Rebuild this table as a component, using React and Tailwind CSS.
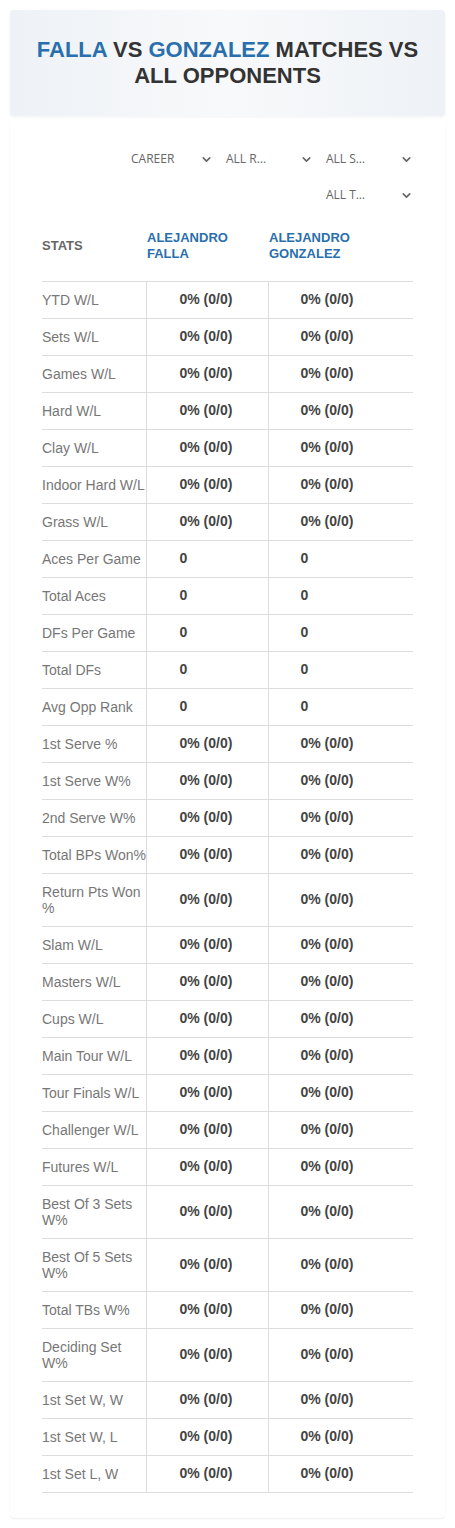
import React from "react";
import { ChevronDown } from "lucide-react";

// labels that break onto two lines in the table
const wrapped = ["Return Pts Won %", "Best Of 3 Sets W%", "Best Of 5 Sets W%", "Deciding Set W%"];

const rows = [
  ["YTD W/L", "0% (0/0)"],
  ["Sets W/L", "0% (0/0)"],
  ["Games W/L", "0% (0/0)"],
  ["Hard W/L", "0% (0/0)"],
  ["Clay W/L", "0% (0/0)"],
  ["Indoor Hard W/L", "0% (0/0)"],
  ["Grass W/L", "0% (0/0)"],
  ["Aces Per Game", "0"],
  ["Total Aces", "0"],
  ["DFs Per Game", "0"],
  ["Total DFs", "0"],
  ["Avg Opp Rank", "0"],
  ["1st Serve %", "0% (0/0)"],
  ["1st Serve W%", "0% (0/0)"],
  ["2nd Serve W%", "0% (0/0)"],
  ["Total BPs Won%", "0% (0/0)"],
  ["Return Pts Won %", "0% (0/0)"],
  ["Slam W/L", "0% (0/0)"],
  ["Masters W/L", "0% (0/0)"],
  ["Cups W/L", "0% (0/0)"],
  ["Main Tour W/L", "0% (0/0)"],
  ["Tour Finals W/L", "0% (0/0)"],
  ["Challenger W/L", "0% (0/0)"],
  ["Futures W/L", "0% (0/0)"],
  ["Best Of 3 Sets W%", "0% (0/0)"],
  ["Best Of 5 Sets W%", "0% (0/0)"],
  ["Total TBs W%", "0% (0/0)"],
  ["Deciding Set W%", "0% (0/0)"],
  ["1st Set W, W", "0% (0/0)"],
  ["1st Set W, L", "0% (0/0)"],
  ["1st Set L, W", "0% (0/0)"],
];

function Select({ label, width }) {
  return (
    <div className={`flex items-center justify-between h-[36px] pl-[5px] pr-[3px] ${width}`}>
      <span className="text-[12px] text-[#666] [font-family:'Open_Sans',sans-serif]">{label}</span>
      <ChevronDown size={13} strokeWidth={3} className="text-[#666]" />
    </div>
  );
}

export default function App() {
  return (
    <div className="w-[455px] bg-white pt-[10px] pb-[10px] [font-family:'Liberation_Sans',Arial,sans-serif]">
      <div className="mx-[10px] h-[106px] rounded-[4px] bg-gradient-to-r from-[#eef2f6] via-[#f8f9fb] to-[#eef2f6] shadow-[0_1px_3px_rgba(0,0,0,0.06)] flex items-center justify-center">
        <h1 className="text-center text-[22px] leading-[26px] font-bold text-[#333] px-[20px]">
          <span className="text-[#2a6fad]">FALLA</span> VS{" "}
          <span className="text-[#2a6fad]">GONZALEZ</span> MATCHES VS ALL OPPONENTS
        </h1>
      </div>

      <div className="mx-[10px] mt-[4px] pt-[21px] pb-[25px] px-[32px] rounded-[4px] bg-white shadow-[0_1px_2px_rgba(0,0,0,0.07)]">
        <div className="flex flex-wrap justify-end gap-x-[5px] pl-[80px] mr-[-3px]">
          <Select label="CAREER" width="w-[90px]" />
          <Select label="ALL R…" width="w-[95px]" />
          <Select label="ALL S…" width="w-[95px]" />
          <Select label="ALL T…" width="w-[95px]" />
        </div>

        <table className="w-[371px] border-collapse table-fixed">
          <colgroup>
            <col className="w-[104px]" />
            <col className="w-[122px]" />
            <col className="w-[145px]" />
          </colgroup>
          <thead>
            <tr className="h-[68px] border-b border-[#ddd]">
              <th className="text-left text-[13px] font-bold text-[#666] align-middle pb-[3px]">STATS</th>
              <th className="text-left text-[13px] leading-[16px] font-bold text-[#2a6fad] pl-[1px] align-middle pb-[2px]">
                ALEJANDRO
                <br />
                FALLA
              </th>
              <th className="text-left text-[13px] leading-[16px] font-bold text-[#2a6fad] pl-[1px] align-middle pb-[2px]">
                ALEJANDRO
                <br />
                GONZALEZ
              </th>
            </tr>
          </thead>
          <tbody>
            {rows.map(([label, value]) => (
              <tr key={label} className="border-b border-[#ddd]">
                <td
                  className={`h-[37px] py-[10px] text-[14px] leading-[16px] text-[#777] align-middle border-r border-[#ddd] ${
                    wrapped.includes(label) ? "" : "whitespace-nowrap"
                  }`}
                >
                  {label}
                </td>
                <td className="pl-[33px] text-[14px] font-bold text-[#444] align-middle border-r border-[#ddd]">{value}</td>
                <td className="pl-[32px] text-[14px] font-bold text-[#444] align-middle">{value}</td>
              </tr>
            ))}
          </tbody>
        </table>
      </div>
    </div>
  );
}
